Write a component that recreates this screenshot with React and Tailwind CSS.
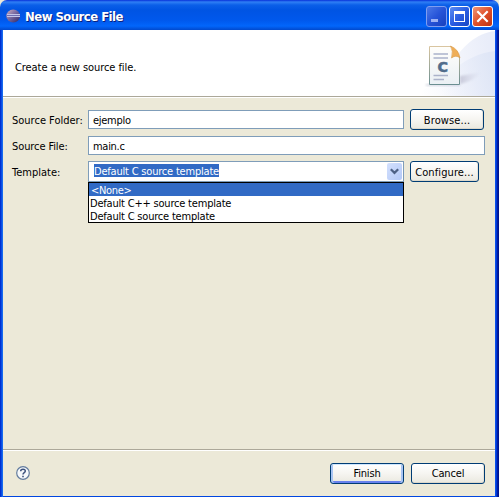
import React from "react";

function Button({ children, className = "", primary = false }) {
  return (
    <button
      className={`flex h-[21px] shrink-0 items-center justify-center rounded-[3px] border border-[#003c74] bg-gradient-to-b from-white via-[#f6f5f1] to-[#eae8df] pt-px whitespace-nowrap ${
        primary
          ? "shadow-[inset_0_1px_0_#cee7ff,inset_2px_0_0_#a9c5f3,inset_-2px_0_0_#a9c5f3,inset_0_-2px_0_#6982ee]"
          : "shadow-[inset_0_-1px_0_#dcd8cb,inset_-1px_0_0_#e7e3d8]"
      } ${className}`}
    >
      {children}
    </button>
  );
}

function EclipseLogo() {
  return (
    <svg width="16" height="16" viewBox="0 0 16 16" className="shrink-0">
      <defs>
        <linearGradient id="ecl" x1="0" y1="0" x2="1" y2="1">
          <stop offset="0" stopColor="#d8b3bb" />
          <stop offset="0.4" stopColor="#8271a6" />
          <stop offset="1" stopColor="#2a2466" />
        </linearGradient>
      </defs>
      <ellipse cx="7.200" cy="8" rx="6.900" ry="6.500" fill="url(#ecl)" />
      <path d="M1 6.500H14M1 8.500H14" stroke="#c3c4e8" strokeWidth="1" />
      <path d="M1 7.500H14" stroke="#6f6cb0" strokeWidth="1" />
    </svg>
  );
}

function WindowButton({ kind }) {
  const fills = {
    min: "border-[#7f9df0] bg-gradient-to-br from-[#4b78e8] via-[#2653d8] to-[#1840bd]",
    max: "border-white bg-gradient-to-br from-[#5d8cf2] via-[#2a5de2] to-[#1745c4]",
    close: "border-white bg-gradient-to-br from-[#ef9575] via-[#df4f29] to-[#bf3310]",
  };
  return (
    <span className={`block size-[21px] rounded-[3px] border ${fills[kind]}`}>
      <svg width="19" height="19" viewBox="0 0 19 19">
        {kind === "min" && <path d="M4 12h7v3H4z" fill="#9cb1f3" />}
        {kind === "max" && (
          <path d="M4 4h11v11H4zM5 7v7h9V7z" fill="#fff" fillRule="evenodd" />
        )}
        {kind === "close" && (
          <path d="M4.300 4.300l10.400 10.400M14.700 4.300l-10.400 10.400" stroke="#fff" strokeWidth="2.200" />
        )}
      </svg>
    </span>
  );
}

function Banner() {
  return (
    <svg width="95" height="66" viewBox="400 30 95 66" className="block">
      <defs>
        <linearGradient id="sweep" gradientUnits="userSpaceOnUse" x1="420" y1="90" x2="495" y2="75">
          <stop offset="0" stopColor="#fff" />
          <stop offset="0.5" stopColor="#f4f6fc" />
          <stop offset="1" stopColor="#e9edf9" />
        </linearGradient>
        <linearGradient id="sweep2" gradientUnits="userSpaceOnUse" x1="440" y1="90" x2="495" y2="75">
          <stop offset="0" stopColor="#e9edf9" stopOpacity="0" />
          <stop offset="1" stopColor="#dfe6f6" />
        </linearGradient>
        <linearGradient id="shade" x1="0" y1="0" x2="1" y2="0">
          <stop offset="0" stopColor="#b4b4c8" stopOpacity="0.65" />
          <stop offset="1" stopColor="#cfd1e2" stopOpacity="0" />
        </linearGradient>
        <linearGradient id="paper" x1="0" y1="0" x2="0" y2="1">
          <stop offset="0" stopColor="#fffefb" />
          <stop offset="1" stopColor="#eaf0f4" />
        </linearGradient>
        <linearGradient id="edge" x1="0" y1="0" x2="0" y2="1">
          <stop offset="0" stopColor="#d9c5a0" />
          <stop offset="1" stopColor="#6b8f91" />
        </linearGradient>
        <filter id="soft" x="-20%" y="-20%" width="140%" height="140%">
          <feGaussianBlur stdDeviation="1.2" />
        </filter>
      </defs>
      <path d="M410 96C448 86 455 36 495 31V96Z" fill="url(#sweep)" />
      <path d="M422 96C446 78 462 55 495 51V96Z" fill="url(#sweep2)" />
      <path d="M460 84V76L482 72Q474 81 460 84Z" fill="url(#shade)" filter="url(#soft)" />
      <path d="M426 84h34v2h-34z" fill="#afb6c8" opacity="0.5" filter="url(#soft)" />
      <path d="M429.500 46.500H451L459.500 57V84.500H429.500Z" fill="url(#paper)" stroke="url(#edge)" />
      <path d="M450.500 46Q453.500 51 451.500 58Q456 54.500 460 58Q458.500 49 450.500 46Z" fill="#efae57" stroke="#d99a4b" strokeWidth="0.6" />
      <path d="M433.500 54H448M433.500 58H448M433.500 75.500H448M433.500 79.500H444" stroke="#abb3ca" strokeWidth="1.300" />
      <text x="437.500" y="72" fontFamily="DejaVu Sans" fontWeight="700" fontSize="14" textLength="10.500" lengthAdjust="spacingAndGlyphs" fill="#516d8b" stroke="#516d8b" strokeWidth="0.500">C</text>
    </svg>
  );
}

function Field({ children, className = "" }) {
  return (
    <div className={`flex h-[19px] items-center border border-[#7f9db9] bg-white pt-px pl-1 tracking-[-0.28px] ${className}`}>
      {children}
    </div>
  );
}

export default function App() {
  return (
    <div className="flex h-[497px] w-[499px] flex-col bg-[linear-gradient(#ece9d8_0_20px,#0046e0_20px)] font-['DejaVu_Sans_Condensed','DejaVu_Sans',sans-serif] text-[11px] leading-[13px] text-black [font-stretch:condensed]">
      <header className="flex h-[30px] shrink-0 items-center rounded-t-[7px] bg-[linear-gradient(to_bottom,#0831d9_0,#2f7ff5_2px,#0b5fe8_5px,#0054e3_10px,#0058ec_20px,#0266fb_26px,#0149cd_30px)] pt-[2px] pr-[6px] pl-[6px]">
        <EclipseLogo />
        <h1 className="mt-px ml-[3px] text-[13px] leading-4 font-bold tracking-[-0.54px] text-white [text-shadow:1px_1px_#0b1f7c]">
          New Source File
        </h1>
        <div className="ml-auto flex gap-[2px]">
          <WindowButton kind="min" />
          <WindowButton kind="max" />
          <WindowButton kind="close" />
        </div>
      </header>

      <div className="flex min-h-0 flex-1 bg-[linear-gradient(to_right,#0030d0_0_1px,#0a4ce4_1px_2px,#166aee_2px_3px,#0046e0_3px_495px,#0a50e8_495px_496px,#0038d8_496px_497px,#001ea0_497px_498px,#00138c_498px)] pr-1 pb-px pl-[3px]">
        <div className="flex flex-1 flex-col bg-[#ece9d8]">
          <section className="flex h-[66px] shrink-0 items-center justify-between bg-white pl-3">
            <p className="pt-[9px] tracking-[-0.07px]">Create a new source file.</p>
            <Banner />
          </section>
          <div className="h-[2px] shrink-0 border-t border-[#aca899] bg-white" />

          <main className="flex flex-1 flex-col pt-[11px] pl-[9px]">
            <div className="flex h-[21px] items-center">
              <label className="w-[76px] pt-px whitespace-nowrap">Source Folder:</label>
              <Field className="w-[316px]">ejemplo</Field>
              <Button className="ml-[6px] w-[74px] tracking-[0.1px]">Browse...</Button>
            </div>
            <div className="mt-[6px] flex h-[19px] items-center">
              <label className="w-[76px] pt-px tracking-[-0.1px]">Source File:</label>
              <Field className="w-[397px]">main.c</Field>
            </div>
            <div className="mt-[6px] flex h-[21px] items-center">
              <label className="w-[76px] pt-px">Template:</label>
              <div className="relative flex h-[21px] w-[316px] items-start justify-between border border-[#7f9db9] bg-white pt-px pr-px pl-[5px]">
                <span className="mt-px h-[13px] bg-[#316ac5] leading-[15px] tracking-[-0.2px] text-white">Default C source template</span>
                <span className="flex h-[17px] w-[15px] items-center justify-center rounded-[2px] bg-gradient-to-br from-[#d3e0fd] to-[#b4c9f7]">
                  <svg width="9" height="7" viewBox="0 0 9 7">
                    <path d="M.8 1.200L4.500 4.900L8.200 1.200" fill="none" stroke="#4d6185" strokeWidth="2.200" />
                  </svg>
                </span>
                <ul className="absolute top-[20px] -left-px z-10 h-[41px] w-[316px] border border-black bg-white leading-[15px] tracking-[-0.2px]">
                  <li className="h-[13px] bg-[#316ac5] pl-[2px] tracking-[-0.3px] text-white">&lt;None&gt;</li>
                  <li className="h-[13px] pl-px">Default C++ source template</li>
                  <li className="h-[13px] pl-px">Default C source template</li>
                </ul>
              </div>
              <Button className="ml-[6px] w-[69px] tracking-[0.1px]">Configure...</Button>
            </div>
          </main>

          <footer className="flex h-[47px] shrink-0 items-center border-t border-[#aca899] pr-[10px] pl-[13px] shadow-[inset_0_1px_#fff]">
            <svg width="14" height="14" viewBox="0 0 14 14">
              <circle cx="7" cy="7" r="6.300" fill="#f5f8fb" stroke="#637c9e" strokeWidth="1.200" />
              <path d="M4.700 5.200C4.700 2.500 9.300 2.500 9.300 5C9.300 6.700 7 6.500 7 8.500" fill="none" stroke="#3d527d" strokeWidth="1.500" />
              <path d="M6.200 9.700h1.600v1.500H6.200z" fill="#3d527d" />
            </svg>
            <div className="ml-auto flex gap-[7px]">
              <Button primary className="w-[74px] tracking-[-0.15px]">Finish</Button>
              <Button className="w-[74px] tracking-[-0.15px]">Cancel</Button>
            </div>
          </footer>
        </div>
      </div>
    </div>
  );
}
